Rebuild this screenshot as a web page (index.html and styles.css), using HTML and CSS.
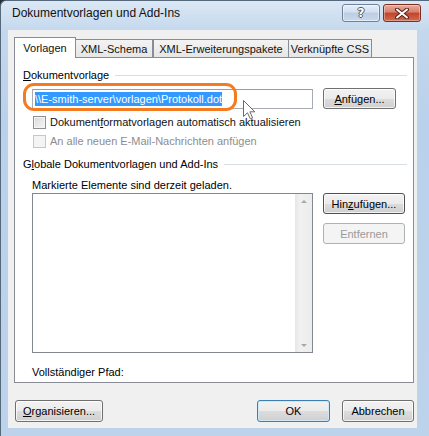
FILE: index.html
```html
<!DOCTYPE html>
<html lang="de">
<head>
    <meta charset="UTF-8">
    <meta name="viewport" content="width=device-width, initial-scale=1.0">
    <title>Dokumentvorlagen und Add-Ins</title>
    <link rel="stylesheet" href="styles.css">
</head>
<body>
    <div class="window">
        <div class="titlebar">
            <span class="title">Dokumentvorlagen und Add-Ins</span>
            <div class="caption-btns">
                <span class="cap help">?</span>
                <span class="cap close">
                    <svg width="14" height="11" viewBox="0 0 14 11">
                        <path d="M2 1.5 L12 9.5 M12 1.5 L2 9.5" stroke="#5a2116" stroke-width="4" stroke-linecap="round"/>
                        <path d="M2 1.5 L12 9.5 M12 1.5 L2 9.5" stroke="#fff" stroke-width="2" stroke-linecap="round"/>
                    </svg>
                </span>
            </div>
        </div>

        <div class="client">
            <div class="tabs">
                <div class="tab active">Vorlagen</div>
                <div class="tab t-schema">XML-Schema</div>
                <div class="tab t-pakete">XML-Erweiterungspakete</div>
                <div class="tab t-css">Verknüpfte CSS</div>
            </div>

            <div class="panel">
                <div class="group-title">
                    <span><u>D</u>okumentvorlage</span>
                    <span class="rule"></span>
                </div>

                <div class="path-row">
                    <div class="textbox">
                        <span class="sel">\\E-smith-server\vorlagen\Protokoll.dot</span>
                    </div>
                    <button class="btn anfuegen"><u>A</u>nfügen...</button>
                    <!-- orange highlight drawn over the path field -->
                    <span class="marker"></span>
                </div>

                <div class="check-row">
                    <span class="checkbox"></span>
                    <span>Dokument<u>f</u>ormatvorlagen automatisch aktualisieren</span>
                </div>
                <div class="check-row disabled">
                    <span class="checkbox"></span>
                    <span>An alle neuen E-Mail-Nachrichten anfügen</span>
                </div>

                <div class="group-title second">
                    <span>G<u>l</u>obale Dokumentvorlagen und Add-Ins</span>
                    <span class="rule"></span>
                </div>

                <div class="hint">Markierte Elemente sind derzeit geladen.</div>

                <div class="list-row">
                    <div class="listbox">
                        <div class="scrollbar">
                            <span class="arrow up"></span>
                            <span class="arrow down"></span>
                        </div>
                    </div>
                    <div class="side-btns">
                        <button class="btn focus">Hin<u>z</u>ufügen...</button>
                        <button class="btn" disabled>Entfernen</button>
                    </div>
                </div>

                <div class="full-path">Vollständiger Pfad:</div>
            </div>

            <div class="footer">
                <button class="btn organize"><u>O</u>rganisieren...</button>
                <button class="btn default ok">OK</button>
                <button class="btn cancel">Abbrechen</button>
            </div>
        </div>

        <svg class="cursor" width="13" height="20" viewBox="0 0 13 20">
            <path d="M0.5 0.5 L0.5 16.5 L4.5 12.8 L7.3 18.8 L9.6 17.8 L6.9 11.8 L11.8 11.8 Z" fill="#fff" stroke="#6a6a6a" stroke-width="1" stroke-linejoin="round"/>
        </svg>
    </div>
</body>
</html>
```

FILE: styles.css
```css
body {
    margin: 0;
    padding: 0;
    background-color: #26303b;
    font-family: "Liberation Sans", Arial, sans-serif;
    font-size: 11px;
    color: #000;
}
.window {
    position: relative;
    width: 429px;
    height: 436px;
    box-sizing: border-box;
    display: flex;
    flex-direction: column;
    background: linear-gradient(#dbe7f4, #c4d8ed 30px, #b9d1ea 120px, #bcd3eb);
    border-left: 1px solid #56687c;
    border-top: 1px solid #56687c;
    border-radius: 6px 0 0 0;
}
.titlebar {
    height: 29px;
    display: flex;
    align-items: flex-start;
    justify-content: space-between;
}
.title {
    font-size: 12px;
    line-height: 16px;
    padding: 4px 0 0 11px;
    color: #111;
}
.caption-btns {
    display: flex;
    gap: 3px;
    margin: 3px 8px 0 0;
}
.cap {
    width: 38px;
    height: 18px;
    box-sizing: border-box;
    border-radius: 3px;
    display: flex;
    align-items: center;
    justify-content: center;
}
.help {
    border: 1px solid #6f829a;
    background: linear-gradient(#e6eef8, #d2dfef 45%, #bccde3 50%, #c9d9ec);
    box-shadow: inset 0 0 0 1px rgba(255, 255, 255, 0.5);
    color: #fff;
    font-family: "DejaVu Sans", sans-serif;
    font-weight: bold;
    font-size: 12px;
    text-shadow: 1px 0 #49586b, -1px 0 #49586b, 0 1px #49586b, 0 -1px #49586b;
}
.close {
    border: 1px solid #7d2e20;
    background: linear-gradient(#eaaa9b, #d5806c 45%, #c2442a 50%, #d06a50);
    box-shadow: inset 0 0 0 1px rgba(255, 255, 255, 0.35);
}
.client {
    flex: 1;
    margin: 0 12px 8px 7px;
    padding: 7px 3px 0 6px;
    background-color: #f0f0f0;
    display: flex;
    flex-direction: column;
}
.tabs {
    display: flex;
    align-items: flex-end;
    height: 21px;
    margin-bottom: -1px;
    position: relative;
    z-index: 1;
}
.tab {
    box-sizing: border-box;
    height: 18px;
    margin-bottom: 1px;
    border: 1px solid #898c95;
    border-bottom: none;
    background: linear-gradient(#f3f3f3, #e6e6e6);
    text-align: center;
    line-height: 18px;
    color: #111;
}
.tab.active {
    height: 21px;
    margin-bottom: 0;
    width: 62px;
    background: #fff;
    line-height: 20px;
}
.t-schema {
    width: 77px;
    border-left: none;
}
.t-pakete {
    width: 136px;
}
.t-css {
    width: 83px;
    border-left: none;
}
.panel {
    box-sizing: border-box;
    height: 326px;
    background-color: #fff;
    border: 1px solid #898c95;
    padding: 10px 6px 0 8px;
}
.group-title {
    display: flex;
    align-items: center;
    height: 14px;
    line-height: 14px;
}
.group-title .rule {
    flex: 1;
    height: 1px;
    background-color: #d5dfe5;
    margin-left: 6px;
}
.group-title.second {
    margin-top: 9px;
}
.path-row {
    position: relative;
    display: flex;
    align-items: center;
    height: 21px;
    margin-top: 6px;
    padding-left: 9px;
}
.textbox {
    box-sizing: border-box;
    width: 281px;
    height: 20px;
    border: 1px solid #a9abb2;
    border-top-color: #9a9ca3;
    padding: 2px 0 0 2px;
}
.sel {
    display: inline-block;
    height: 14px;
    line-height: 14px;
    background-color: #3399ff;
    color: #fff;
    vertical-align: top;
}
.marker {
    position: absolute;
    left: 0;
    top: -5px;
    width: 214px;
    height: 28px;
    box-sizing: border-box;
    border: 3px solid #f47b20;
    border-radius: 11px;
}
.btn {
    box-sizing: border-box;
    height: 21px;
    padding: 0;
    border: 1px solid #707070;
    border-radius: 3px;
    background: linear-gradient(#f2f2f2, #ebebeb 50%, #dddddd 50%, #cfcfcf);
    box-shadow: inset 0 0 0 1px rgba(255, 255, 255, 0.75);
    font-family: inherit;
    font-size: 11px;
    color: #000;
}
.btn:disabled {
    border-color: #adb2b5;
    background: #f4f4f4;
    box-shadow: none;
    color: #9a9a9a;
}
.btn.focus {
    border-color: #4f4f4f;
}
.btn.default {
    border-color: #3c7fb1;
    box-shadow: inset 0 0 0 1px #cfe8f7;
}
.anfuegen {
    width: 73px;
    margin-left: 10px;
}
.check-row {
    display: flex;
    align-items: center;
    gap: 4px;
    height: 14px;
    margin-top: 6px;
    padding-left: 10px;
    color: #111;
}
.check-row + .check-row {
    margin-top: 5px;
}
.checkbox {
    box-sizing: border-box;
    width: 13px;
    height: 13px;
    border: 1px solid #8e8f8f;
    background: linear-gradient(135deg, #d8d8d8, #f7f7f7);
    box-shadow: inset 0 0 0 1px #f4f4f4;
}
.check-row.disabled {
    color: #8d8d8d;
}
.check-row.disabled .checkbox {
    border-color: #c7c7c7;
    background: #f4f4f4;
    box-shadow: none;
}
.hint {
    margin-top: 7px;
    padding-left: 9px;
    line-height: 14px;
}
.list-row {
    display: flex;
    align-items: flex-start;
    margin-top: 1px;
    padding-left: 9px;
}
.listbox {
    box-sizing: border-box;
    width: 281px;
    height: 160px;
    border: 1px solid #828790;
    background-color: #fff;
    display: flex;
    justify-content: flex-end;
}
.scrollbar {
    width: 17px;
    background: linear-gradient(90deg, #e6e6e6, #f1f1f1 30%, #ececec);
    display: flex;
    flex-direction: column;
    justify-content: space-between;
    align-items: center;
    padding: 6px 0 5px;
    box-sizing: border-box;
}
.arrow {
    width: 0;
    height: 0;
    border-left: 3px solid transparent;
    border-right: 3px solid transparent;
}
.arrow.up {
    border-bottom: 3px solid #a8a8a8;
}
.arrow.down {
    border-top: 3px solid #a8a8a8;
}
.side-btns {
    display: flex;
    flex-direction: column;
    gap: 9px;
    margin-left: 10px;
}
.side-btns .btn {
    width: 82px;
}
.full-path {
    margin-top: 12px;
    padding-left: 9px;
    line-height: 14px;
}
.footer {
    display: flex;
    align-items: center;
    margin-top: 17px;
    gap: 12px;
}
.footer .btn {
    height: 22px;
}
.organize {
    width: 88px;
    margin-left: 1px;
    margin-right: auto;
}
.ok {
    width: 73px;
}
.cancel {
    width: 72px;
}
.cursor {
    position: absolute;
    left: 242px;
    top: 99px;
}
```
